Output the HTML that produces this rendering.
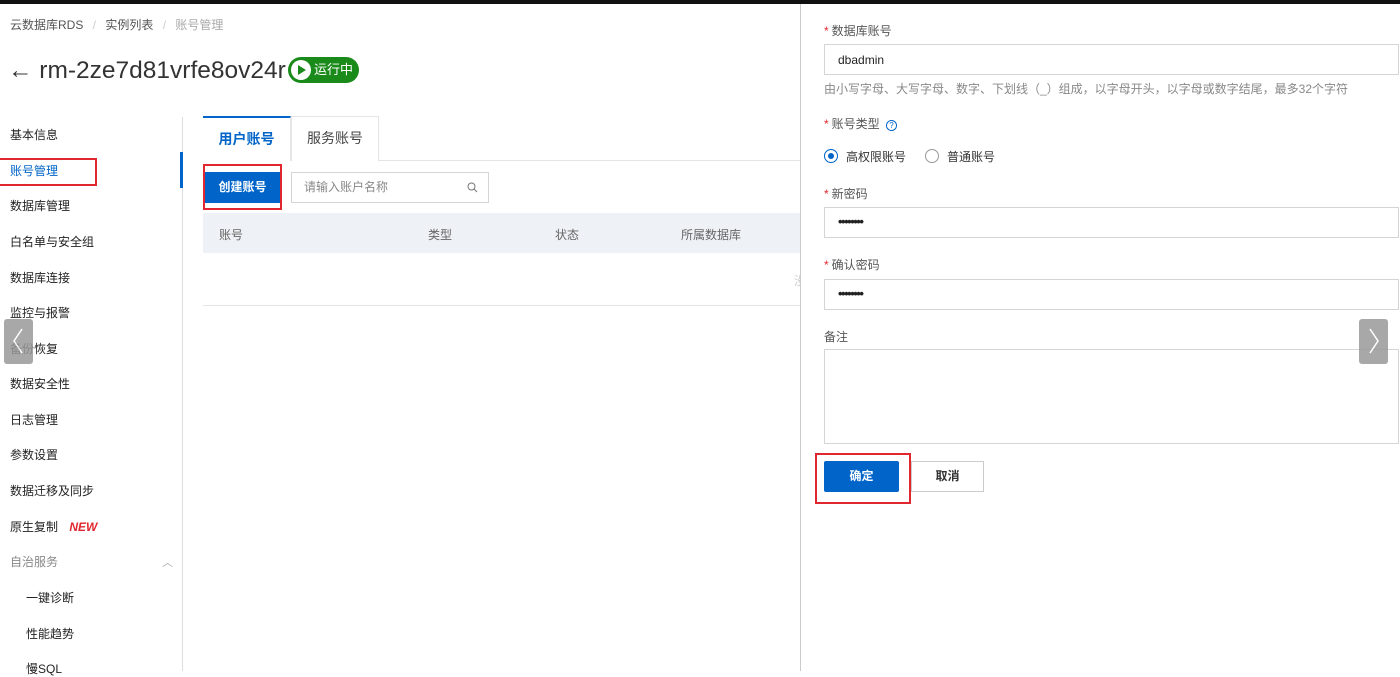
<!DOCTYPE html>
<html><head><meta charset="utf-8"><style>
*{margin:0;padding:0;box-sizing:border-box}
body{width:1400px;height:671px;overflow:hidden;background:#fff;position:relative;font-family:"Liberation Sans","Noto Sans CJK SC",sans-serif;color:#333;font-size:12px}
.a{position:absolute;white-space:nowrap}
.nav{left:10px;font-size:12px;color:#222;line-height:16px}
.red{position:absolute;border:2px solid #e0262e}
.lbl{left:824px;font-size:12px;color:#555;line-height:16px}
.lbl b{color:#e0262e;font-weight:normal;margin-right:3px}
.inp{position:absolute;left:824px;width:575px;border:1px solid #d5d5d5;background:#fff}
.dots{position:absolute;left:13px;top:6px;font-size:13px;font-weight:bold;letter-spacing:-1.5px;color:#222}
</style></head><body>
<div class="a" style="left:0;top:0;width:1400px;height:4px;background:#111"></div>

<div class="a" style="left:10px;top:16px;font-size:12px;color:#555">云数据库RDS <span style="color:#ccc;margin:0 6px">/</span> 实例列表 <span style="color:#ccc;margin:0 6px">/</span> <span style="color:#aaa">账号管理</span></div>

<div class="a" style="left:8px;top:56px;font-size:24.5px;color:#333;line-height:30px">← rm-2ze7d81vrfe8ov24r</div>
<div class="a" style="left:288px;top:57px;width:71px;height:26px;border-radius:13px;background:#1a8a1a;color:#fff;font-size:13px;line-height:26px;padding-left:26px">运行中
<div style="position:absolute;left:3px;top:3px;width:20px;height:20px;border-radius:50%;background:#fff"><div style="position:absolute;left:7px;top:5px;border-left:8px solid #1a8a1a;border-top:5px solid transparent;border-bottom:5px solid transparent"></div></div></div>

<div class="a nav" style="top:127px">基本信息</div>
<div class="a nav" style="top:163px;color:#0064c8">账号管理</div>
<div class="a nav" style="top:198px">数据库管理</div>
<div class="a nav" style="top:234px">白名单与安全组</div>
<div class="a nav" style="top:270px">数据库连接</div>
<div class="a nav" style="top:305px">监控与报警</div>
<div class="a nav" style="top:341px">备份恢复</div>
<div class="a nav" style="top:376px">数据安全性</div>
<div class="a nav" style="top:412px">日志管理</div>
<div class="a nav" style="top:447px">参数设置</div>
<div class="a nav" style="top:483px">数据迁移及同步</div>
<div class="a nav" style="top:519px">原生复制 <i style="color:#e0262e;font-weight:bold;margin-left:8px">NEW</i></div>
<div class="a nav" style="top:554px;color:#888">自治服务</div>
<div class="a" style="left:162px;top:554px;color:#aaa;font-size:11px">︿</div>
<div class="a nav" style="top:590px;left:26px">一键诊断</div>
<div class="a nav" style="top:626px;left:26px">性能趋势</div>
<div class="a nav" style="top:661px;left:26px">慢SQL</div>
<div class="red" style="left:-2px;top:158px;width:99px;height:28px"></div>
<div class="a" style="left:4px;top:319px;width:29px;height:45px;background:#9a9a9a;opacity:.85;border-radius:3px"><svg width="29" height="45"><path d="M18 10 L10 22 L18 34" stroke="#fff" stroke-width="1.5" fill="none"/></svg></div>

<div class="a" style="left:182px;top:117px;width:1px;height:554px;background:#ddd"></div>
<div class="a" style="left:180px;top:152px;width:3px;height:36px;background:#0064c8"></div>

<div class="a" style="left:203px;top:116px;width:88px;height:45px;border-top:2px solid #0064c8;border-right:1px solid #e5e5e5;color:#0064c8;font-size:14px;font-weight:bold;text-align:center;line-height:43px">用户账号</div>
<div class="a" style="left:291px;top:116px;width:88px;height:45px;border:1px solid #e5e5e5;border-bottom:none;font-size:14px;text-align:center;line-height:43px;color:#444">服务账号</div>
<div class="a" style="left:379px;top:160px;width:421px;height:1px;background:#e5e5e5"></div>

<div class="a" style="left:205px;top:172px;width:75px;height:31px;background:#0064c8;color:#fff;font-weight:bold;text-align:center;line-height:31px">创建账号</div>
<div class="red" style="left:203px;top:164px;width:79px;height:46px"></div>
<div class="a" style="left:291px;top:172px;width:198px;height:31px;border:1px solid #d5d5d5;color:#888;padding-left:12px;line-height:29px">请输入账户名称</div>
<svg class="a" style="left:467px;top:182px" width="11" height="11"><circle cx="4.5" cy="4.5" r="3.5" stroke="#777" fill="none"/><path d="M7 7 L10 10" stroke="#777"/></svg>

<div class="a" style="left:203px;top:213px;width:597px;height:40px;background:#eef1f5"></div>
<div class="a" style="left:219px;top:226px;color:#666">账号</div>
<div class="a" style="left:428px;top:226px;color:#666">类型</div>
<div class="a" style="left:555px;top:226px;color:#666">状态</div>
<div class="a" style="left:681px;top:226px;color:#666">所属数据库</div>
<div class="a" style="left:794px;top:272px;color:#ccc">没</div>
<div class="a" style="left:203px;top:305px;width:597px;height:1px;background:#e5e5e5"></div>

<div class="a" style="left:800px;top:4px;width:600px;height:667px;background:#fff;border-left:1px solid #ccc"></div>
<div class="a lbl" style="top:23px"><b>*</b>数据库账号</div>
<div class="inp" style="top:44px;height:31px"><span class="a" style="left:13px;top:8px;font-size:12px;color:#222">dbadmin</span></div>
<div class="a lbl" style="top:81px;color:#888">由小写字母、大写字母、数字、下划线（_）组成，以字母开头，以字母或数字结尾，最多32个字符</div>
<div class="a lbl" style="top:116px"><b>*</b>账号类型 <span style="display:inline-block;width:11px;height:11px;border:1px solid #0064c8;border-radius:50%;color:#0064c8;font-size:8px;text-align:center;line-height:9px;margin-left:3px">?</span></div>
<div class="a" style="left:824px;top:149px;width:14px;height:14px;border:1px solid #0064c8;border-radius:50%"><div style="position:absolute;left:3px;top:3px;width:6px;height:6px;border-radius:50%;background:#0064c8"></div></div>
<div class="a" style="left:846px;top:148px;color:#333">高权限账号</div>
<div class="a" style="left:925px;top:149px;width:14px;height:14px;border:1px solid #999;border-radius:50%"></div>
<div class="a" style="left:947px;top:148px;color:#333">普通账号</div>
<div class="a lbl" style="top:186px"><b>*</b>新密码</div>
<div class="inp" style="top:207px;height:31px"><span class="dots">••••••••</span></div>
<div class="a lbl" style="top:257px"><b>*</b>确认密码</div>
<div class="inp" style="top:279px;height:31px"><span class="dots">••••••••</span></div>
<div class="a lbl" style="top:329px">备注</div>
<div class="inp" style="top:349px;height:95px"></div>
<div class="a" style="left:824px;top:461px;width:75px;height:31px;background:#0064c8;color:#fff;font-weight:bold;text-align:center;line-height:31px;border-radius:2px">确定</div>
<div class="a" style="left:911px;top:461px;width:73px;height:31px;border:1px solid #ccc;color:#333;font-weight:bold;text-align:center;line-height:29px">取消</div>
<div class="red" style="left:815px;top:453px;width:96px;height:51px"></div>
<div class="a" style="left:1359px;top:319px;width:29px;height:45px;background:#9a9a9a;opacity:.85;border-radius:3px"><svg width="29" height="45"><path d="M11 10 L19 22 L11 34" stroke="#fff" stroke-width="1.5" fill="none"/></svg></div>
</body></html>
